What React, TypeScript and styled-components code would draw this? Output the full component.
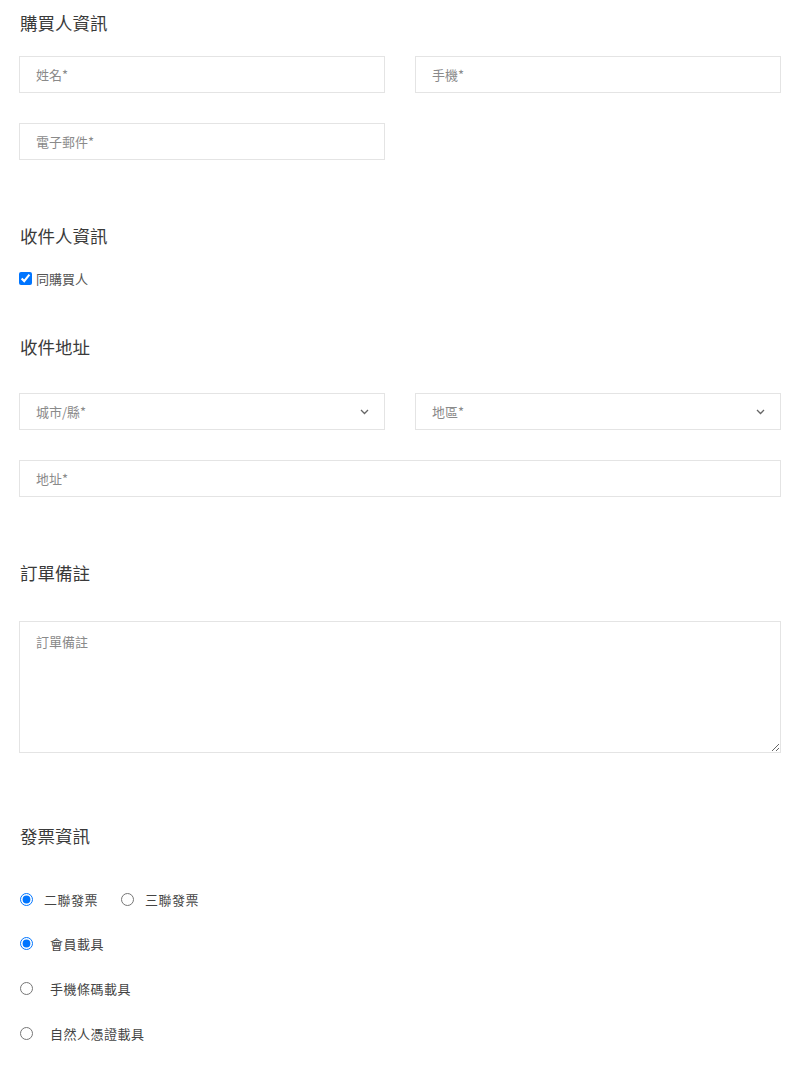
import React from "react";
import styled, { createGlobalStyle } from "styled-components";

const Global = createGlobalStyle`
  html, body { margin: 0; padding: 0; background: #fff; }
  body { font-family: "Noto Sans CJK TC", "Noto Sans", sans-serif; color: #333; }
  * { box-sizing: border-box; }
`;

const Page = styled.div`
  padding: 9px 19px 0 19px;
  width: 800px;
`;

const Heading = styled.h2<{ $top: number; $bottom: number }>`
  margin: ${(p) => p.$top}px 0 ${(p) => p.$bottom}px 1px;
  font-size: 17.5px;
  font-weight: 400;
  line-height: 27px;
  color: #3a3a3a;
`;

const Grid = styled.div`
  display: grid;
  grid-template-columns: 1fr 1fr;
  column-gap: 30px;
  row-gap: 30px;
`;

const Field = styled.input`
  display: block;
  width: 100%;
  height: 37px;
  border: 1px solid #e4e4e4;
  border-radius: 0;
  padding: 0 16px;
  font-family: "Noto Sans CJK TC", sans-serif;
  font-size: 13px;
  color: #333;
  outline: none;
  &::placeholder { color: #8a8a8a; }
`;

const SelectWrap = styled.div`
  position: relative;
`;

const Select = styled.select`
  display: block;
  width: 100%;
  height: 37px;
  border: 1px solid #e4e4e4;
  border-radius: 0;
  background: #fff;
  padding: 0 16px;
  font-family: "Noto Sans CJK TC", sans-serif;
  font-size: 13px;
  color: #8a8a8a;
  appearance: none;
  outline: none;
`;

const Chevron = styled.svg`
  position: absolute;
  right: 16px;
  top: 16px;
  width: 9px;
  height: 6px;
  pointer-events: none;
`;

const Full = styled.div`
  grid-column: 1 / -1;
`;

const Area = styled.textarea`
  display: block;
  width: 100%;
  height: 132px;
  border: 1px solid #e4e4e4;
  border-radius: 0;
  padding: 10px 16px;
  font-family: "Noto Sans CJK TC", sans-serif;
  font-size: 13px;
  color: #333;
  outline: none;
  resize: vertical;
  &::placeholder { color: #8a8a8a; }
`;

const CheckRow = styled.label`
  display: flex;
  align-items: center;
  height: 20px;
  font-size: 13px;
  color: #555;
  input { margin: 0 4px 0 0; width: 13px; height: 13px; }
`;

const RadioGroup = styled.div`
  display: flex;
  flex-direction: column;
  gap: 24.7px;
  margin-top: 40px;
`;

const RadioLine = styled.div`
  display: flex;
  align-items: center;
  gap: 22px;
  height: 20px;
`;

const Radio = styled.label<{ $wide?: boolean }>`
  display: flex;
  align-items: center;
  font-size: 13px;
  color: #444;
  letter-spacing: 0.5px;
  input {
    margin: 0 ${(p) => (p.$wide ? 17 : 11)}px 0 1px;
    width: 13px;
    height: 13px;
  }
`;

export default function App() {
  return (
    <>
      <Global />
      <Page>
        <Heading $top={0} $bottom={20}>購買人資訊</Heading>
        <Grid>
          <Field placeholder="姓名*" />
          <Field placeholder="手機*" />
          <Field placeholder="電子郵件*" />
        </Grid>

        <Heading $top={62} $bottom={19}>收件人資訊</Heading>
        <CheckRow>
          <input type="checkbox" defaultChecked />
          同購買人
        </CheckRow>

        <Heading $top={45} $bottom={33}>收件地址</Heading>
        <Grid>
          <SelectWrap>
            <Select defaultValue="">
              <option value="">城市/縣*</option>
            </Select>
            <Chevron viewBox="0 0 9 6">
              <path d="M1 1l3.5 3.5L8 1" fill="none" stroke="#666" strokeWidth="1.3" />
            </Chevron>
          </SelectWrap>
          <SelectWrap>
            <Select defaultValue="">
              <option value="">地區*</option>
            </Select>
            <Chevron viewBox="0 0 9 6">
              <path d="M1 1l3.5 3.5L8 1" fill="none" stroke="#666" strokeWidth="1.3" />
            </Chevron>
          </SelectWrap>
          <Full>
            <Field placeholder="地址*" />
          </Full>
        </Grid>

        <Heading $top={62} $bottom={35}>訂單備註</Heading>
        <Area placeholder="訂單備註" />

        <Heading $top={69} $bottom={0}>發票資訊</Heading>
        <RadioGroup>
          <RadioLine>
            <Radio>
              <input type="radio" name="inv" defaultChecked />
              二聯發票
            </Radio>
            <Radio>
              <input type="radio" name="inv" />
              三聯發票
            </Radio>
          </RadioLine>
          <RadioLine>
            <Radio $wide>
              <input type="radio" name="carrier" defaultChecked />
              會員載具
            </Radio>
          </RadioLine>
          <RadioLine>
            <Radio $wide>
              <input type="radio" name="carrier" />
              手機條碼載具
            </Radio>
          </RadioLine>
          <RadioLine>
            <Radio $wide>
              <input type="radio" name="carrier" />
              自然人憑證載具
            </Radio>
          </RadioLine>
        </RadioGroup>
      </Page>
    </>
  );
}
